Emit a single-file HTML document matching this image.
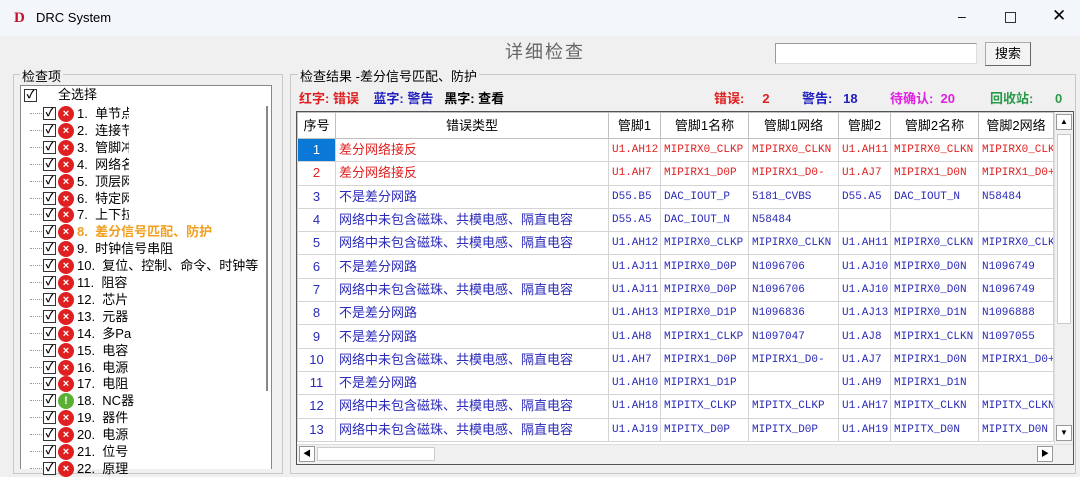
<!DOCTYPE html>
<html><head><meta charset="utf-8"><style>
*{box-sizing:border-box;margin:0;padding:0}
body{width:1080px;height:469px;overflow:hidden;background:#f0f0f0;font-family:"Liberation Sans","Noto Sans CJK SC",sans-serif;font-size:12px;position:relative;color:#000}
.abs{position:absolute}
.tb{left:0;top:0;width:1080px;height:36px;background:#f3f6fa}
.grp{border:1px solid #c8c8c8}
.lbl{background:#f0f0f0;padding:0 2px;font-size:13px}
.tree{left:20px;top:85px;width:252px;height:384px;background:#fff;border:1px solid #888;border-bottom:none}
.row{position:absolute;left:0;height:17px;font-size:13px;line-height:17px;white-space:nowrap}
.cb{position:absolute;width:13px;height:13px;border:1px solid #333;background:#fff;font-size:11px;line-height:11px;text-align:center;font-weight:bold}
.ic{position:absolute;width:16px;height:16px;border-radius:50%;background:#e02020;color:#fff;font-size:11px;line-height:16px;text-align:center;font-weight:bold}
.dots{position:absolute;border-top:1px dotted #999;width:12px}
table{border-collapse:collapse;table-layout:fixed;font-size:13px}
td,th{border:1px solid #d4d4d4;height:23.3px;white-space:nowrap;overflow:hidden;padding:0 3px;line-height:14px;vertical-align:middle}
th{font-weight:normal;background:#fff;height:26px;text-align:center;border-color:#c0c0c0}
.m{font-family:"Liberation Mono",monospace;font-size:11px}
.r td{color:#e02020}.b td{color:#2a2ab8}
td.n{text-align:center}
</style></head><body>
<div class="abs tb"></div>
<div class="abs" style="left:14px;top:10px;color:#c8102e;font-family:'Liberation Serif',serif;font-weight:bold;font-size:15px">D</div>
<div class="abs" style="left:36px;top:10px;font-size:13px">DRC System</div>
<div class="abs" style="left:958px;top:8px;font-size:14px">–</div>
<div class="abs" style="left:1005px;top:12px;width:11px;height:11px;border:1px solid #333"></div>
<div class="abs" style="left:1052px;top:6px;font-size:17px">✕</div>

<div class="abs" style="left:505px;top:38px;font-size:18px;color:#666;letter-spacing:2px">详细检查</div>
<div class="abs" style="left:775px;top:43px;width:202px;height:21px;background:#fff;border:1px solid #999;border-bottom-color:#ddd;border-right-color:#ddd"></div>
<div class="abs" style="left:985px;top:42px;width:46px;height:24px;background:#f4f4f4;border:1px solid #aaa;border-right-color:#666;border-bottom-color:#666;text-align:center;line-height:22px;font-size:13px">搜索</div>

<div class="abs grp" style="left:13px;top:74px;width:270px;height:400px"></div>
<div class="abs lbl" style="left:20px;top:66px">检查项</div>
<div class="abs tree">
<div class="cb" style="left:3px;top:3px">✓</div>
<div class="row" style="left:37px;top:0">全选择</div>
<div class="abs" style="left:245px;top:20px;width:2px;height:285px;background:#888"></div>
<div id="tl"></div>
</div>

<div class="abs grp" style="left:290px;top:74px;width:786px;height:400px"></div>
<div class="abs lbl" style="left:298px;top:66px">检查结果 -差分信号匹配、防护</div>
<div class="abs" style="left:299px;top:88px;font-size:13px;font-weight:bold;white-space:nowrap"><span style="color:#e02020">红字: 错误</span>&nbsp;&nbsp;&nbsp;&nbsp;<span style="color:#2020c0">蓝字: 警告</span>&nbsp;&nbsp;&nbsp;黑字: 查看</div>
<div class="abs" style="left:714px;top:88px;font-size:13px;font-weight:bold;white-space:nowrap;width:360px"><span style="color:#e02020">错误:&nbsp;&nbsp;&nbsp;&nbsp; 2</span><span style="color:#2020c0;position:absolute;left:88px">警告:&nbsp;&nbsp;&nbsp;18</span><span style="color:#e020e0;position:absolute;left:176px">待确认:&nbsp;&nbsp;20</span><span style="color:#2a9a4a;position:absolute;left:276px">回收站:&nbsp;&nbsp;&nbsp;&nbsp;&nbsp; 0</span></div>

<div class="abs" style="left:296px;top:111px;width:778px;height:354px;border:1px solid #555;background:#fff;overflow:hidden">
<table style="width:756px">
<colgroup><col style="width:38px"><col style="width:273px"><col style="width:52px"><col style="width:88px"><col style="width:90px"><col style="width:52px"><col style="width:88px"><col style="width:75px"></colgroup>
<tr><th>序号</th><th>错误类型</th><th>管脚1</th><th>管脚1名称</th><th>管脚1网络</th><th>管脚2</th><th>管脚2名称</th><th>管脚2网络</th></tr>
<tr class="r"><td class="n" style="background:#0a78d7;color:#fff">1</td><td>差分网络接反</td><td class="m">U1.AH12</td><td class="m">MIPIRX0_CLKP</td><td class="m">MIPIRX0_CLKN</td><td class="m">U1.AH11</td><td class="m">MIPIRX0_CLKN</td><td class="m">MIPIRX0_CLK</td></tr>
<tr class="r"><td class="n">2</td><td>差分网络接反</td><td class="m">U1.AH7</td><td class="m">MIPIRX1_D0P</td><td class="m">MIPIRX1_D0-</td><td class="m">U1.AJ7</td><td class="m">MIPIRX1_D0N</td><td class="m">MIPIRX1_D0+</td></tr>
<tr class="b"><td class="n">3</td><td>不是差分网路</td><td class="m">D55.B5</td><td class="m">DAC_IOUT_P</td><td class="m">5181_CVBS</td><td class="m">D55.A5</td><td class="m">DAC_IOUT_N</td><td class="m">N58484</td></tr>
<tr class="b"><td class="n">4</td><td>网络中未包含磁珠、共模电感、隔直电容</td><td class="m">D55.A5</td><td class="m">DAC_IOUT_N</td><td class="m">N58484</td><td></td><td></td><td></td></tr>
<tr class="b"><td class="n">5</td><td>网络中未包含磁珠、共模电感、隔直电容</td><td class="m">U1.AH12</td><td class="m">MIPIRX0_CLKP</td><td class="m">MIPIRX0_CLKN</td><td class="m">U1.AH11</td><td class="m">MIPIRX0_CLKN</td><td class="m">MIPIRX0_CLK</td></tr>
<tr class="b"><td class="n">6</td><td>不是差分网路</td><td class="m">U1.AJ11</td><td class="m">MIPIRX0_D0P</td><td class="m">N1096706</td><td class="m">U1.AJ10</td><td class="m">MIPIRX0_D0N</td><td class="m">N1096749</td></tr>
<tr class="b"><td class="n">7</td><td>网络中未包含磁珠、共模电感、隔直电容</td><td class="m">U1.AJ11</td><td class="m">MIPIRX0_D0P</td><td class="m">N1096706</td><td class="m">U1.AJ10</td><td class="m">MIPIRX0_D0N</td><td class="m">N1096749</td></tr>
<tr class="b"><td class="n">8</td><td>不是差分网路</td><td class="m">U1.AH13</td><td class="m">MIPIRX0_D1P</td><td class="m">N1096836</td><td class="m">U1.AJ13</td><td class="m">MIPIRX0_D1N</td><td class="m">N1096888</td></tr>
<tr class="b"><td class="n">9</td><td>不是差分网路</td><td class="m">U1.AH8</td><td class="m">MIPIRX1_CLKP</td><td class="m">N1097047</td><td class="m">U1.AJ8</td><td class="m">MIPIRX1_CLKN</td><td class="m">N1097055</td></tr>
<tr class="b"><td class="n">10</td><td>网络中未包含磁珠、共模电感、隔直电容</td><td class="m">U1.AH7</td><td class="m">MIPIRX1_D0P</td><td class="m">MIPIRX1_D0-</td><td class="m">U1.AJ7</td><td class="m">MIPIRX1_D0N</td><td class="m">MIPIRX1_D0+</td></tr>
<tr class="b"><td class="n">11</td><td>不是差分网路</td><td class="m">U1.AH10</td><td class="m">MIPIRX1_D1P</td><td></td><td class="m">U1.AH9</td><td class="m">MIPIRX1_D1N</td><td></td></tr>
<tr class="b"><td class="n">12</td><td>网络中未包含磁珠、共模电感、隔直电容</td><td class="m">U1.AH18</td><td class="m">MIPITX_CLKP</td><td class="m">MIPITX_CLKP</td><td class="m">U1.AH17</td><td class="m">MIPITX_CLKN</td><td class="m">MIPITX_CLKN</td></tr>
<tr class="b"><td class="n">13</td><td>网络中未包含磁珠、共模电感、隔直电容</td><td class="m">U1.AJ19</td><td class="m">MIPITX_D0P</td><td class="m">MIPITX_D0P</td><td class="m">U1.AH19</td><td class="m">MIPITX_D0N</td><td class="m">MIPITX_D0N</td></tr>
</table>
<div class="abs" style="left:757px;top:0;width:19px;height:332px;background:#f0f0f0;border-left:1px solid #ddd"></div>
<div class="abs" style="left:759px;top:2px;width:16px;height:16px;background:#fff;border:1px solid #999;font-size:8px;text-align:center;line-height:14px">▲</div>
<div class="abs" style="left:760px;top:22px;width:14px;height:190px;background:#fff;border:1px solid #ccc"></div>
<div class="abs" style="left:759px;top:313px;width:16px;height:16px;background:#fff;border:1px solid #999;font-size:8px;text-align:center;line-height:14px">▼</div>
<div class="abs" style="left:0;top:332px;width:776px;height:20px;background:#f0f0f0;border-top:1px solid #ddd"></div>
<div class="abs" style="left:2px;top:334px;width:16px;height:16px;background:#fff;border:1px solid #999;font-size:8px;text-align:center;line-height:14px">◀</div>
<div class="abs" style="left:20px;top:335px;width:118px;height:14px;background:#fff;border:1px solid #ccc"></div>
<div class="abs" style="left:740px;top:334px;width:16px;height:16px;background:#fff;border:1px solid #999;font-size:8px;text-align:center;line-height:14px">▶</div>
</div>

<script>
var items=["1. 单节点","2. 连接节","3. 管脚冲","4. 网络名","5. 顶层网","6. 特定网","7. 上下拉","8. 差分信号匹配、防护","9. 时钟信号串阻","10. 复位、控制、命令、时钟等","11. 阻容","12. 芯片","13. 元器","14. 多Pa","15. 电容","16. 电源","17. 电阻","18. NC器","19. 器件","20. 电源","21. 位号","22. 原理"];
var h="";
items.forEach(function(t,i){
 var y=19+i*16.9;
 var c=i==17?"#5ab034":"#e02020";
 h+='<div class="dots" style="left:9px;top:'+(y+8)+'px"></div>';
 h+='<div class="cb" style="left:22px;top:'+(y+2)+'px">✓</div>';
 h+='<div class="ic" style="left:37px;top:'+(y+1)+'px;background:'+c+'">'+(i==17?'!':'×')+'</div>';
 var st=i==7?'color:#f0a020;font-weight:bold;':'';
 h+='<div class="row" style="left:56px;top:'+y+'px;'+st+(i<7||i>=10?'width:'+(i<7?52:70)+'px;overflow:hidden;':'')+'">'+t.replace('. ','.&nbsp; ')+'</div>';
});
document.getElementById('tl').innerHTML=h;
</script>
</body></html>
